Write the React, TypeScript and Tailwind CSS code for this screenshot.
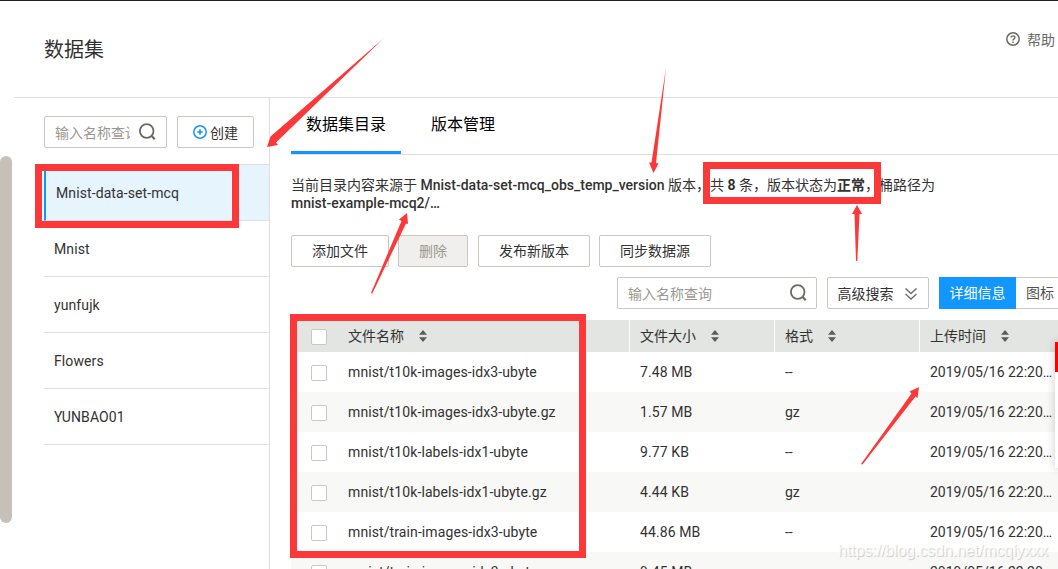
import type { ReactNode } from "react";

const DATASETS = ["Mnist", "yunfujk", "Flowers", "YUNBAO01"];

const FILES = [
  { name: "mnist/t10k-images-idx3-ubyte", size: "7.48 MB", format: "--" },
  { name: "mnist/t10k-images-idx3-ubyte.gz", size: "1.57 MB", format: "gz" },
  { name: "mnist/t10k-labels-idx1-ubyte", size: "9.77 KB", format: "--" },
  { name: "mnist/t10k-labels-idx1-ubyte.gz", size: "4.44 KB", format: "gz" },
  { name: "mnist/train-images-idx3-ubyte", size: "44.86 MB", format: "--" },
  { name: "mnist/train-images-idx3-ubyte.gz", size: "9.45 MB", format: "gz" },
];

function SearchIcon() {
  return (
    <svg className="h-[18px] w-[18px] shrink-0" viewBox="0 0 18 18" fill="none" stroke="#6b6963">
      <circle cx="8.7" cy="8" r="6.8" strokeWidth="1.8" />
      <path d="M13.3 12.6l3.4 3.6" strokeWidth="2.2" />
    </svg>
  );
}

function SortIcon() {
  return (
    <svg className="h-3 w-2" viewBox="0 0 8 12" fill="#5c5b57">
      <path d="M4 0l4 4.7H0zM4 12l4-4.7H0z" />
    </svg>
  );
}

function Checkbox() {
  return <span className="mt-0.5 h-4 w-4 shrink-0 rounded-[2px] border border-[#c9c7c0] bg-white" />;
}

function Button({ children, className }: { children: ReactNode; className: string }) {
  return (
    <button className={`flex h-8 shrink-0 items-center justify-center rounded-[2px] border border-[#c9c7bf] ${className}`}>
      {children}
    </button>
  );
}

function HeadCell({ label, className }: { label: string; className: string }) {
  return (
    <div className={`flex h-8 shrink-0 items-center border-l border-white pl-2.5 ${className}`}>
      <span className="mr-[15px]">{label}</span>
      <SortIcon />
    </div>
  );
}

function Sidebar() {
  return (
    <aside className="ml-3.5 w-64 shrink-0 border-r border-[#dfdfdd] pl-[30px] pt-[18px]">
      <div className="flex gap-2.5">
        <div className="flex h-8 w-[123px] items-center rounded-[2px] border border-[#c9c7bf] pl-2.5">
          <span className="w-[75px] overflow-hidden whitespace-nowrap pt-0.5 text-[#9b9890]">输入名称查询</span>
          <span className="ml-2"><SearchIcon /></span>
        </div>
        <Button className="w-[77px] gap-[3px] bg-white">
          <svg className="h-3.5 w-3.5" viewBox="0 0 14 14" fill="none" stroke="#1893f8">
            <circle cx="7" cy="7" r="6.2" strokeWidth="1.5" />
            <path d="M7 4.2v5.6M4.2 7h5.6" strokeWidth="1.6" />
          </svg>
          <span className="pt-0.5">创建</span>
        </Button>
      </div>
      <ul className="mt-4 border-t border-[#dfdfdd]">
        <li className="flex h-14 items-center border-b border-l-2 border-b-[#dfdfdd] border-l-[#1296fb] bg-[#e6f4fe] pl-2.5 tracking-[0.1px]">
          Mnist-data-set-mcq
        </li>
        {DATASETS.map((name) => (
          <li key={name} className="flex h-14 items-center border-b border-[#dfdfdd] pl-2.5 tracking-[0.1px]">{name}</li>
        ))}
      </ul>
    </aside>
  );
}

function FileTable() {
  return (
    <div className="mt-[11px]">
      <div className="flex bg-[#e2e5e2]">
        <div className="flex h-8 w-[338px] shrink-0 items-center pl-5">
          <Checkbox />
          <span className="ml-[21px] mr-[15px]">文件名称</span>
          <SortIcon />
        </div>
        <HeadCell label="文件大小" className="w-[145px]" />
        <HeadCell label="格式" className="w-[145px]" />
        <HeadCell label="上传时间" className="w-[160px]" />
      </div>
      {FILES.map((file) => (
        <div key={file.name} className="flex h-10 items-center odd:bg-[#f8f8f7]">
          <div className="flex w-[338px] shrink-0 items-center pl-5">
            <Checkbox />
            <span className="ml-[21px] tracking-[0.1px]">{file.name}</span>
          </div>
          <span className="w-[145px] shrink-0 pl-[11px] tracking-[0.1px]">{file.size}</span>
          <span className="w-[145px] shrink-0 pl-[11px]">{file.format}</span>
          <span className="shrink-0 pl-[11px]">2019/05/16 22:20…</span>
        </div>
      ))}
    </div>
  );
}

function Main() {
  return (
    <main className="min-w-0 flex-1 overflow-hidden pl-[21px]">
      <nav className="flex h-[57px] border-b border-[#dfdfdd] text-base text-black">
        <span className="flex h-14 w-[110px] items-center justify-center border-b-[3px] border-[#1296fb]">数据集目录</span>
        <span className="flex h-14 w-[124px] items-center justify-center border-b-[3px] border-transparent">版本管理</span>
      </nav>
      <p className="mt-[21px] h-9 w-[660px] leading-[18px]">
        当前目录内容来源于 <b className="font-medium">Mnist-data-set-mcq_obs_temp_version</b> 版本，共 <b>8</b> 条，版本状态为<b>正常</b>，桶路径为
        <br />
        <b className="font-medium">mnist-example-mcq2/…</b>
      </p>
      <div className="mt-[23px] flex">
        <Button className="w-[98px] bg-white">添加文件</Button>
        <Button className="ml-[9px] w-[70px] bg-[#f0efed] text-[#9b9890]">删除</Button>
        <Button className="ml-2.5 w-[112px] bg-white">发布新版本</Button>
        <Button className="ml-[9px] w-[112px] bg-white">同步数据源</Button>
      </div>
      <div className="ml-[326px] mt-2.5 flex gap-2.5">
        <div className="flex h-8 w-[200px] shrink-0 items-center justify-between rounded-[2px] border border-[#c9c7bf] pl-2.5 pr-[9px] text-[#9b9890]">
          <span className="pt-0.5">输入名称查询</span>
          <SearchIcon />
        </div>
        <Button className="w-[102px] gap-[11px] bg-white pr-0.5">
          <span className="pt-0.5">高级搜索</span>
          <svg className="mt-0.5 h-3 w-3" viewBox="0 0 12 12" fill="none" stroke="#73716c" strokeWidth="1.5">
            <path d="M.5.5L6 5.5l5.5-5M.5 6L6 11l5.5-5" />
          </svg>
        </Button>
        <div className="flex h-8 shrink-0">
          <span className="flex w-[77px] items-center justify-center bg-[#1296ff] text-white">详细信息</span>
          <span className="flex w-[60px] items-center border-y border-[#c9c7bf] pl-2.5 text-[#54534f]">图标</span>
        </div>
      </div>
      <FileTable />
    </main>
  );
}

// Red marks drawn over the console
function Annotations() {
  return (
    <div className="pointer-events-none absolute inset-0">
      <div className="absolute left-[35px] top-[164px] h-16 w-[204px] border-[7px] border-[#fd3838]" />
      <div className="absolute left-[703px] top-[162px] h-[42px] w-[178px] border-[7px] border-[#fd3838]" />
      <div className="absolute left-[290px] top-[314px] h-[244px] w-[296px] border-[7px] border-[#fd3838]" />
      <svg className="absolute inset-0 h-full w-full" viewBox="0 0 1058 569" fill="#fd3838">
        <path d="M384 38L270.500 136.500 267 147 278 145 276 142.500z" />
        <path d="M666 68L651.5 162.500 649 162.500 653.500 173 658.500 163.500 656 163z" />
        <path d="M857 205L852 214 854.5 214 856 261 857.3 261 859.5 214 862 214z" />
        <path d="M407 213L399 219.5 401.5 221 371 293 372.3 293.5 406 223.5 408 224z" />
        <path d="M919 387L909.5 391.5 911.5 393.5 861 464 862.5 464.5 915.5 396.5 917.5 398z" />
      </svg>
    </div>
  );
}

export default function App() {
  return (
    <div className="relative flex h-[569px] w-[1058px] flex-col overflow-hidden border-t border-[#222] bg-white font-['Roboto','Noto_Sans_CJK_SC',sans-serif] text-sm text-[#333230]">
      <header className="ml-3.5 flex h-[97px] shrink-0 items-center justify-between border-b border-[#dfdfdd] pl-[30px]">
        <h1 className="pt-0.5 text-xl">数据集</h1>
        <div className="mb-[19px] mr-[3px] flex items-center gap-[7px] text-[#6b6963]">
          <svg className="mb-0.5 h-3.5 w-3.5" viewBox="0 0 14 14" fill="none" stroke="#6b6963">
            <circle cx="7" cy="7" r="6.2" strokeWidth="1.5" />
            <path d="M5.2 5.6c0-2.3 3.7-2.3 3.7 0 0 1.3-1.9 1.3-1.9 2.8M7 9.5v1.4" strokeWidth="1.4" />
          </svg>
          帮助
        </div>
      </header>
      <div className="flex min-h-0 flex-1">
        <Sidebar />
        <Main />
      </div>
      <div className="absolute left-0 top-[155px] h-[367px] w-3 rounded-md bg-[#c5c1b9]" />
      <div className="absolute left-[1055px] top-[341px] h-[126px] w-5 bg-white shadow-[0_0_10px_rgba(0,0,0,0.2)]">
        <div className="h-[30px] bg-[#f00]" />
      </div>
      <div className="absolute -top-px left-0 h-[569px] w-[1058px]">
        <Annotations />
      </div>
      <span className="absolute left-[838px] top-[540px] whitespace-nowrap font-['Liberation_Sans',sans-serif] text-base leading-5 tracking-[-0.12px] text-white/80 [text-shadow:1px_1px_1px_rgba(0,0,0,0.2)]">
        https://blog.csdn.net/mcqlyxxx
      </span>
    </div>
  );
}
